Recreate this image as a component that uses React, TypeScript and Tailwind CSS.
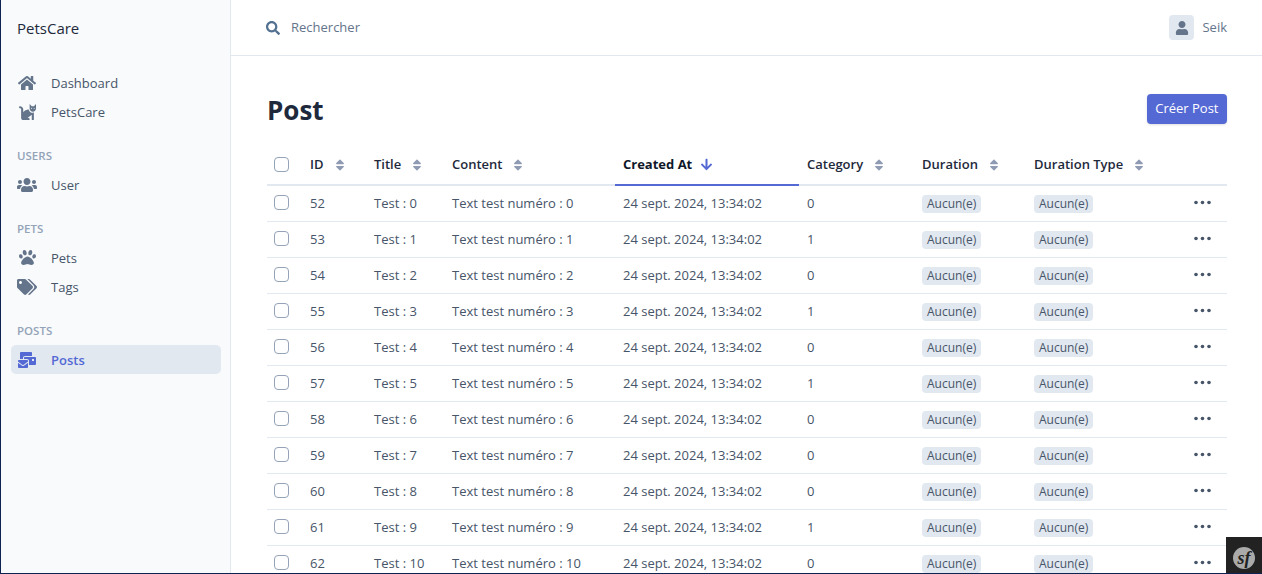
import type { ReactNode } from "react";
import {
  FaArrowDown,
  FaCat,
  FaHome,
  FaMailBulk,
  FaPaw,
  FaSearch,
  FaSort,
  FaTags,
  FaUser,
  FaUsers,
} from "react-icons/fa";

const rows = [
  { id: 52, n: 0, cat: 0 },
  { id: 53, n: 1, cat: 1 },
  { id: 54, n: 2, cat: 0 },
  { id: 55, n: 3, cat: 1 },
  { id: 56, n: 4, cat: 0 },
  { id: 57, n: 5, cat: 1 },
  { id: 58, n: 6, cat: 0 },
  { id: 59, n: 7, cat: 0 },
  { id: 60, n: 8, cat: 0 },
  { id: 61, n: 9, cat: 1 },
  { id: 62, n: 10, cat: 0 },
];

function NavItem({ icon, label, active }: { icon: ReactNode; label: string; active?: boolean }) {
  return (
    <a
      className={`flex h-[29px] items-center rounded-[5px] pl-[6px] text-[13px] ${
        active ? "bg-[#e2e8f0] font-semibold text-[#5469d4]" : "text-[#475569]"
      }`}
    >
      <span className={`flex w-[20px] justify-center text-[18px] ${active ? "text-[#5469d4]" : "text-[#64748b]"}`}>
        {icon}
      </span>
      <span className="ml-[14px] pt-[2px]">{label}</span>
    </a>
  );
}

function Section({ title }: { title: string }) {
  return (
    <div className="flex h-[44px] items-center pl-[6px] pt-[15px] text-[11.5px] font-semibold uppercase text-[#94a3b8]">
      {title}
    </div>
  );
}

function Sidebar() {
  return (
    <aside className="w-[230px] shrink-0 border-r border-[#e2e8f0] bg-[#f8fafc] pl-[10px] pr-[9px]">
      <div className="flex h-[68px] items-start pl-[6px] pt-[17px] text-[15px] font-medium text-[#1e293b]">
        PetsCare
      </div>
      <NavItem icon={<FaHome />} label="Dashboard" />
      <NavItem icon={<FaCat className="text-[17px]" />} label="PetsCare" />
      <Section title="Users" />
      <NavItem icon={<FaUsers className="text-[20px]" />} label="User" />
      <Section title="Pets" />
      <NavItem icon={<FaPaw className="text-[17px]" />} label="Pets" />
      <NavItem icon={<FaTags className="text-[20px]" />} label="Tags" />
      <Section title="Posts" />
      <NavItem icon={<FaMailBulk />} label="Posts" active />
    </aside>
  );
}

function Topbar() {
  return (
    <header className="flex h-[56px] items-center justify-between border-b border-[#e2e8f0] pl-[35px] pr-[35px]">
      <div className="flex items-center text-[13px] text-[#64748b]">
        <FaSearch className="text-[14px] text-[#52708f]" />
        <span className="ml-[11px]">Rechercher</span>
      </div>
      <div className="flex items-center text-[13px] text-[#64748b]">
        <span className="flex h-[25px] w-[25px] items-center justify-center rounded-[4px] bg-[#e2e8f0] text-[14px] text-[#64748b]">
          <FaUser />
        </span>
        <span className="ml-[8px]">Seik</span>
      </div>
    </header>
  );
}

function Checkbox() {
  return <span className="block h-[15px] w-[15px] rounded-[4px] border border-[#94a3b8] bg-white" />;
}

function Th({ label, w }: { label: string; w: string }) {
  return (
    <th className={`${w} border-b-2 border-[#e2e8f0] px-[8px] text-left font-semibold`}>
      <span className="flex items-center">
        {label}
        <FaSort className="ml-[9px] text-[14px] text-[#8f9bb3]" />
      </span>
    </th>
  );
}

function Badge() {
  return (
    <span className="inline-block rounded-[4px] bg-[#e2e8f0] px-[5px] text-[12px] leading-[18px] text-[#475569]">
      Aucun(e)
    </span>
  );
}

function Dots() {
  return (
    <svg viewBox="0 0 17 5" className="mb-[1px] ml-auto h-[5px] w-[17px] fill-[#475569]">
      <circle cx="2" cy="2.5" r="1.8" />
      <circle cx="8.5" cy="2.5" r="1.8" />
      <circle cx="15" cy="2.5" r="1.8" />
    </svg>
  );
}

function PostTable() {
  return (
    <table className="w-full table-fixed border-collapse text-[13px]">
      <thead>
        <tr className="h-[40px] text-[#1e293b]">
          <th className="w-[35px] border-b-2 border-[#e2e8f0] pl-[7px] text-left">
            <Checkbox />
          </th>
          <Th label="ID" w="w-[64px]" />
          <Th label="Title" w="w-[78px]" />
          <Th label="Content" w="w-[171px]" />
          <th className="w-[184px] border-b-2 border-[#5469d4] px-[8px] text-left font-bold text-[#0f172a]">
            <span className="flex items-center">
              Created At
              <FaArrowDown className="ml-[8px] text-[13px] text-[#5469d4]" />
            </span>
          </th>
          <Th label="Category" w="w-[115px]" />
          <Th label="Duration" w="w-[112px]" />
          <Th label="Duration Type" w="w-[152px]" />
          <th className="border-b-2 border-[#e2e8f0]" />
        </tr>
      </thead>
      <tbody className="text-[#475569]">
        {rows.map((r) => (
          <tr key={r.id} className="h-[36px] border-b border-[#e2e8f0]">
            <td className="pb-[2px] pl-[7px]">
              <Checkbox />
            </td>
            <td className="px-[8px] pt-[1px]">{r.id}</td>
            <td className="px-[8px] pt-[1px]">Test : {r.n}</td>
            <td className="px-[8px] pt-[1px] whitespace-nowrap">Text test numéro : {r.n}</td>
            <td className="px-[8px] pt-[1px] whitespace-nowrap">24 sept. 2024, 13:34:02</td>
            <td className="px-[8px] pt-[1px]">{r.cat}</td>
            <td className="px-[8px] pt-[1px]">
              <Badge />
            </td>
            <td className="px-[8px] pt-[1px]">
              <Badge />
            </td>
            <td className="pr-[16px]">
              <Dots />
            </td>
          </tr>
        ))}
      </tbody>
    </table>
  );
}

export default function App() {
  return (
    <div className="relative flex h-[574px] overflow-hidden border-b border-l border-[#0f2350] bg-white font-['Open_Sans','Noto_Sans',sans-serif]">
      <Sidebar />
      <main className="min-w-0 flex-1">
        <Topbar />
        <div className="pl-[36px] pr-[35px] pt-[38px]">
          <div className="mb-[19px] flex items-start justify-between">
            <h1 className="text-[26px] font-bold leading-[32px] text-[#1e293b]">Post</h1>
            <button className="h-[30px] rounded-[4px] bg-[#5469d4] px-[8.5px] text-[13px] text-white shadow-sm">
              Créer Post
            </button>
          </div>
          <PostTable />
        </div>
      </main>
      <div className="absolute bottom-0 right-0 flex h-[36px] w-[36px] items-center justify-center bg-[#222] pt-[6px]">
        <span className="flex h-[22px] w-[22px] items-center justify-center rounded-full bg-[#aaa] font-['Liberation_Serif',serif] text-[18px] font-bold italic leading-none text-[#222]">
          sf
        </span>
      </div>
    </div>
  );
}
